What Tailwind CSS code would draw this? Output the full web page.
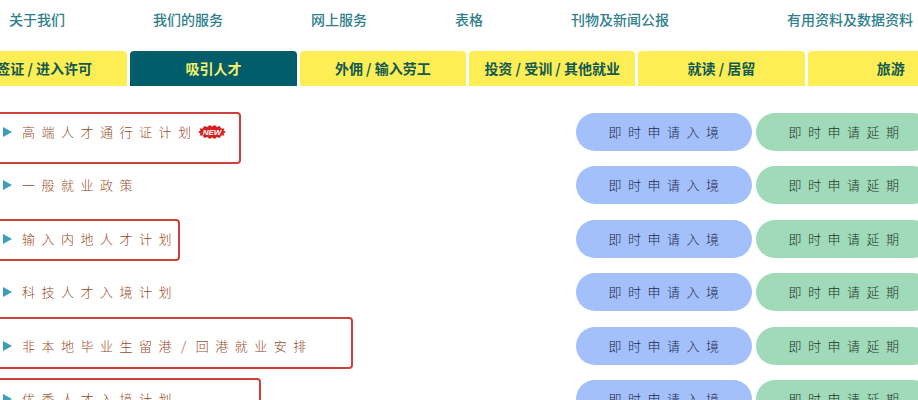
<!DOCTYPE html>
<html lang="zh-CN">
<head>
  <meta charset="UTF-8">
  <meta name="viewport" content="width=device-width, initial-scale=1.0">
  <title>吸引人才</title>
  <script src="https://cdn.jsdelivr.net/npm/@tailwindcss/browser@4"></script>
</head>
<body class="h-screen overflow-hidden bg-white text-sm font-['Noto_Sans_CJK_SC',sans-serif]">

  <!-- site menu -->
  <nav class="flex h-[51px] gap-[88px] pt-[9px] pl-[9px] pr-[5px] whitespace-nowrap font-medium text-[#2f7f8d]">
    <a href="#">关于我们</a>
    <a href="#">我们的服务</a>
    <a href="#">网上服务</a>
    <a href="#">表格</a>
    <a href="#">刊物及新闻公报</a>
    <a href="#" class="ml-auto">有用资料及数据资料</a>
  </nav>

  <!-- category tabs, run off both sides -->
  <nav class="-ml-[39px] -mr-[56px] grid h-[35px] grid-cols-6 gap-[3px] whitespace-nowrap font-bold text-[#12594f]">
    <a href="#" class="flex items-center justify-center rounded-t bg-[#fdee55] pb-[2px]">签证 / 进入许可</a>
    <a href="#" class="flex items-center justify-center rounded-t bg-[#025d6b] pb-[2px] text-[#f8f36a]">吸引人才</a>
    <a href="#" class="flex items-center justify-center rounded-t bg-[#fdee55] pb-[2px]">外佣 / 输入劳工</a>
    <a href="#" class="flex items-center justify-center rounded-t bg-[#fdee55] pb-[2px]">投资 / 受训 / 其他就业</a>
    <a href="#" class="flex items-center justify-center rounded-t bg-[#fdee55] pb-[2px]">就读 / 居留</a>
    <a href="#" class="flex items-center justify-center rounded-t bg-[#fdee55] pb-[2px]">旅游</a>
  </nav>

  <!-- schemes -->
  <ul class="-mr-[14px] mt-[27px] whitespace-nowrap text-[13px] font-light tracking-[0.5em]">
    <li class="relative flex h-[53px] items-start gap-1 even:h-[54px]">
      <div class="absolute -left-1 -top-px h-[52px] w-[245px] rounded-sm border-2 border-[#cf3f3b]"></div>
      <div class="relative flex h-[38px] flex-1 items-center pl-[3px]">
        <svg class="mr-[10px] h-[10px] w-[9px] fill-[#3a9fb5]" viewBox="0 0 9 10"><path d="M0 0L9 5L0 10Z"/></svg>
        <a href="#" class="text-[#994a28]">高端人才通行证计划</a>
        <svg class="h-[14px] w-[28px]" viewBox="0 0 28 14">
          <path fill="#d8201f" d="M0 7L2.500 5.500L1.500 3.500L5 3.500L6 1L9.500 2L11.500 0L14 1.500L17 0L18.500 2L22 1L23 3.500L26.500 3.500L25.500 5.500L28 7L25.500 8.500L26.500 10.500L23 10.500L22 13L18.500 12L17 14L14 12.500L11.500 14L9.500 12L6 13L5 10.500L1.500 10.500L2.500 8.500Z"/>
          <text x="14" y="10" fill="#fff" text-anchor="middle" class="font-['Liberation_Sans',sans-serif] text-[8px] font-bold italic tracking-normal">NEW</text>
        </svg>
      </div>
      <button class="h-[38px] w-[176px] rounded-full bg-[#a3c0fb] pl-[6px] tracking-[0.5em] text-[#1c2848]">即时申请入境</button>
      <button class="h-[38px] w-[176px] rounded-full bg-[#a1dab8] pl-[6px] tracking-[0.5em] text-[#17362a]">即时申请延期</button>
    </li>
    <li class="relative flex h-[53px] items-start gap-1 even:h-[54px]">
      <div class="relative flex h-[38px] flex-1 items-center pl-[3px]">
        <svg class="mr-[10px] h-[10px] w-[9px] fill-[#3a9fb5]" viewBox="0 0 9 10"><path d="M0 0L9 5L0 10Z"/></svg>
        <a href="#" class="text-[#994a28]">一般就业政策</a>
      </div>
      <button class="h-[38px] w-[176px] rounded-full bg-[#a3c0fb] pl-[6px] tracking-[0.5em] text-[#1c2848]">即时申请入境</button>
      <button class="h-[38px] w-[176px] rounded-full bg-[#a1dab8] pl-[6px] tracking-[0.5em] text-[#17362a]">即时申请延期</button>
    </li>
    <li class="relative flex h-[53px] items-start gap-1 even:h-[54px]">
      <div class="absolute -left-1 -top-px h-[42px] w-[184px] rounded-sm border-2 border-[#cf3f3b]"></div>
      <div class="relative flex h-[38px] flex-1 items-center pl-[3px]">
        <svg class="mr-[10px] h-[10px] w-[9px] fill-[#3a9fb5]" viewBox="0 0 9 10"><path d="M0 0L9 5L0 10Z"/></svg>
        <a href="#" class="text-[#994a28]">输入内地人才计划</a>
      </div>
      <button class="h-[38px] w-[176px] rounded-full bg-[#a3c0fb] pl-[6px] tracking-[0.5em] text-[#1c2848]">即时申请入境</button>
      <button class="h-[38px] w-[176px] rounded-full bg-[#a1dab8] pl-[6px] tracking-[0.5em] text-[#17362a]">即时申请延期</button>
    </li>
    <li class="relative flex h-[53px] items-start gap-1 even:h-[54px]">
      <div class="relative flex h-[38px] flex-1 items-center pl-[3px]">
        <svg class="mr-[10px] h-[10px] w-[9px] fill-[#3a9fb5]" viewBox="0 0 9 10"><path d="M0 0L9 5L0 10Z"/></svg>
        <a href="#" class="text-[#994a28]">科技人才入境计划</a>
      </div>
      <button class="h-[38px] w-[176px] rounded-full bg-[#a3c0fb] pl-[6px] tracking-[0.5em] text-[#1c2848]">即时申请入境</button>
      <button class="h-[38px] w-[176px] rounded-full bg-[#a1dab8] pl-[6px] tracking-[0.5em] text-[#17362a]">即时申请延期</button>
    </li>
    <li class="relative flex h-[53px] items-start gap-1 even:h-[54px]">
      <div class="absolute -left-1 -top-[10px] h-[52px] w-[357px] rounded-sm border-2 border-[#cf3f3b]"></div>
      <div class="relative flex h-[38px] flex-1 items-center pl-[3px]">
        <svg class="mr-[10px] h-[10px] w-[9px] fill-[#3a9fb5]" viewBox="0 0 9 10"><path d="M0 0L9 5L0 10Z"/></svg>
        <a href="#" class="text-[#994a28]">非本地毕业生留港<span class="px-[3px]">/</span>回港就业安排</a>
      </div>
      <button class="h-[38px] w-[176px] rounded-full bg-[#a3c0fb] pl-[6px] tracking-[0.5em] text-[#1c2848]">即时申请入境</button>
      <button class="h-[38px] w-[176px] rounded-full bg-[#a1dab8] pl-[6px] tracking-[0.5em] text-[#17362a]">即时申请延期</button>
    </li>
    <li class="relative flex h-[53px] items-start gap-1 even:h-[54px]">
      <div class="absolute -left-1 -top-[2px] h-[52px] w-[265px] rounded-sm border-2 border-[#cf3f3b]"></div>
      <div class="relative flex h-[38px] flex-1 items-center pl-[3px]">
        <svg class="mr-[10px] h-[10px] w-[9px] fill-[#3a9fb5]" viewBox="0 0 9 10"><path d="M0 0L9 5L0 10Z"/></svg>
        <a href="#" class="text-[#994a28]">优秀人才入境计划</a>
      </div>
      <button class="h-[38px] w-[176px] rounded-full bg-[#a3c0fb] pl-[6px] tracking-[0.5em] text-[#1c2848]">即时申请入境</button>
      <button class="h-[38px] w-[176px] rounded-full bg-[#a1dab8] pl-[6px] tracking-[0.5em] text-[#17362a]">即时申请延期</button>
    </li>
  </ul>

</body>
</html>
